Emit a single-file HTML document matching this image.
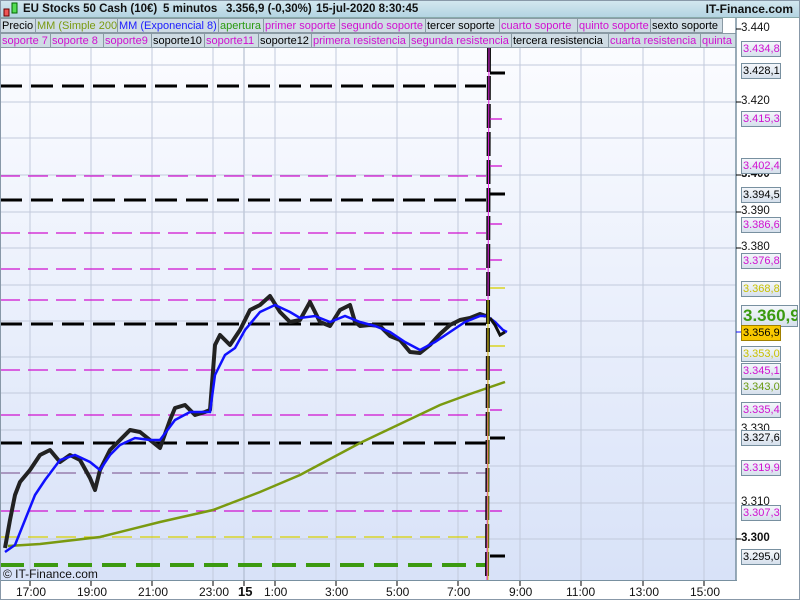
<!DOCTYPE html>
<html><head><meta charset="utf-8"><style>
*{margin:0;padding:0;box-sizing:border-box}
body{width:800px;height:600px;overflow:hidden;background:#fff;font-family:"Liberation Sans",sans-serif;position:relative}
.hdr{position:absolute;left:0;top:0;width:800px;height:18px;background:linear-gradient(#d4e8f0,#b4d4e2);border-bottom:1px solid #8aa;font-size:11.5px;font-weight:bold;color:#111;line-height:18px}
.hdr span{position:absolute;top:0}
.row{position:absolute;left:0;height:15px;font-size:11px;line-height:14px;white-space:nowrap;overflow:hidden;width:736px}
.row span{position:absolute;top:0;background:#cfdce4;border:1px solid #8a9aa4;padding-left:1px;height:15px;overflow:hidden}
.lab{position:absolute;left:741px;width:40px;height:16px;font-size:11px;line-height:14px;border:1px solid #7890a0;background:linear-gradient(#f4f7fb,#d6e0ec);padding-left:1px;overflow:hidden;white-space:nowrap}
.tk{position:absolute;left:741px;font-size:11.5px;color:#111}
.bt{position:absolute;top:585px;font-size:12px;color:#111}
</style></head><body>
<div class="hdr"><svg width="20" height="18" style="position:absolute;left:2px;top:0"><rect x="2" y="9" width="5" height="7" fill="#e55" stroke="#600"/><rect x="10" y="3" width="5" height="10" fill="#5d5" stroke="#060"/></svg><span style="left:23px">EU Stocks 50 Cash (10€)</span><span style="left:163px">5 minutos</span><span style="left:226px">3.356,9 (-0,30%)</span><span style="left:316px">15-jul-2020 8:30:45</span><span style="right:7px;font-size:12px">IT-Finance.com</span></div>
<div class="row" style="top:18px"><span style="left:0;width:36px">Precio</span><span style="left:35px;width:83px;color:#7a9a10">MM (Simple 200)</span><span style="left:117px;width:102px;color:#1c1cff">MM (Exponencial 8)</span><span style="left:218px;width:46px;color:#2a9a10">apertura</span><span style="left:263px;width:77px;color:#d010d0">primer soporte</span><span style="left:339px;width:87px;color:#d010d0">segundo soporte</span><span style="left:425px;width:75px">tercer soporte</span><span style="left:499px;width:79px;color:#d010d0">cuarto soporte</span><span style="left:577px;width:74px;color:#d010d0">quinto soporte</span><span style="left:650px;width:73px">sexto soporte</span></div>
<div class="row" style="top:33px"><span style="left:0;width:51px;color:#d010d0">soporte 7</span><span style="left:50px;width:54px;color:#d010d0">soporte 8</span><span style="left:103px;width:49px;color:#d010d0">soporte9</span><span style="left:151px;width:54px">soporte10</span><span style="left:204px;width:55px;color:#d010d0">soporte11</span><span style="left:258px;width:54px">soporte12</span><span style="left:311px;width:99px;color:#d010d0">primera resistencia</span><span style="left:409px;width:103px;color:#d010d0">segunda resistencia</span><span style="left:511px;width:98px">tercera resistencia</span><span style="left:608px;width:93px;color:#d010d0">cuarta resistencia</span><span style="left:700px;width:60px;color:#d010d0">quinta resistencia</span></div>
<svg width="800" height="600" style="position:absolute;left:0;top:0">
<defs><linearGradient id="g" x1="0" y1="0" x2="0" y2="1"><stop offset="0" stop-color="#fbfcff"/><stop offset="1" stop-color="#d8e2f8"/></linearGradient></defs>
<rect x="1" y="48" width="735" height="532" fill="url(#g)"/>
<g stroke="#c2cadc" stroke-width="1">
<line x1="30" y1="48" x2="30" y2="580"/><line x1="91" y1="48" x2="91" y2="580"/><line x1="152" y1="48" x2="152" y2="580"/><line x1="213" y1="48" x2="213" y2="580"/><line x1="244" y1="48" x2="244" y2="580" stroke="#a8b4c8"/><line x1="275" y1="48" x2="275" y2="580"/><line x1="336" y1="48" x2="336" y2="580"/><line x1="397" y1="48" x2="397" y2="580"/><line x1="458" y1="48" x2="458" y2="580"/><line x1="520" y1="48" x2="520" y2="580"/><line x1="581" y1="48" x2="581" y2="580"/><line x1="643" y1="48" x2="643" y2="580"/><line x1="704" y1="48" x2="704" y2="580"/>
<line x1="0" y1="65" x2="736" y2="65"/><line x1="0" y1="102" x2="736" y2="102"/><line x1="0" y1="138" x2="736" y2="138"/><line x1="0" y1="212" x2="736" y2="212"/><line x1="0" y1="248" x2="736" y2="248"/><line x1="0" y1="285" x2="736" y2="285"/><line x1="0" y1="321" x2="736" y2="321"/><line x1="0" y1="357" x2="736" y2="357"/><line x1="0" y1="393" x2="736" y2="393"/><line x1="0" y1="430" x2="736" y2="430"/><line x1="0" y1="466" x2="736" y2="466"/><line x1="0" y1="503" x2="736" y2="503"/><line x1="0" y1="539" x2="736" y2="539"/><line x1="0" y1="175" x2="736" y2="175"/>
</g>
<g stroke="#d010d0" stroke-width="1.3" stroke-dasharray="20,8">
<line x1="0" y1="176" x2="486" y2="176"/><line x1="0" y1="233" x2="486" y2="233"/><line x1="0" y1="269" x2="486" y2="269"/><line x1="0" y1="300" x2="486" y2="300"/><line x1="0" y1="370" x2="486" y2="370"/><line x1="0" y1="415" x2="486" y2="415"/><line x1="0" y1="473" x2="486" y2="473" stroke="#8a6aa0"/><line x1="0" y1="511" x2="486" y2="511"/>
</g>
<line x1="0" y1="537" x2="486" y2="537" stroke="#d8d000" stroke-width="1.3" stroke-dasharray="20,8"/>
<g stroke="#000" stroke-width="3" stroke-dasharray="22,9">
<line x1="0" y1="86" x2="486" y2="86"/><line x1="0" y1="200" x2="486" y2="200"/><line x1="0" y1="324" x2="486" y2="324"/><line x1="0" y1="443" x2="486" y2="443"/>
</g>
<line x1="0" y1="565" x2="486" y2="565" stroke="#3c9a10" stroke-width="4" stroke-dasharray="24,10"/>
<polyline fill="none" stroke="#7a9a10" stroke-width="2.5" points="8,546 40,544 100,537 160,522 213,510 260,492 300,475 360,443 440,405 470,394 505,382"/>
<polyline fill="none" stroke="#222" stroke-width="4" stroke-linejoin="round" points="5,548 10,520 15,495 20,482 30,470 40,455 50,450 60,462 70,455 80,460 90,478 95,490 100,470 110,450 120,440 130,430 140,432 150,440 160,448 170,420 175,408 185,405 195,415 205,412 210,410 215,345 220,335 230,345 240,330 250,310 260,305 270,296 280,312 290,322 300,320 310,302 320,322 330,326 340,310 350,305 355,322 360,326 370,325 380,326 390,336 400,340 410,352 420,353 430,345 440,334 450,325 460,320 470,318 480,314 486,316"/>
<polyline fill="none" stroke="#1010ff" stroke-width="2.5" points="5,552 15,545 25,520 35,495 45,480 60,460 75,455 90,462 100,470 110,455 120,445 135,438 150,440 160,440 175,420 190,412 210,412 215,375 225,355 235,348 245,330 260,312 275,305 290,312 300,318 315,316 330,322 345,316 360,322 375,326 390,332 405,342 420,350 435,342 450,332 465,322 480,316 487,316 495,322 503,330 507,332"/>
<polyline fill="none" stroke="#111" stroke-width="3" points="490,318 495,325 500,335 505,332"/>
<line x1="489" y1="48" x2="487" y2="580" stroke="#111" stroke-width="4" stroke-dasharray="24,4"/>
<line x1="489" y1="48" x2="487" y2="580" stroke="#e020e0" stroke-width="1"/>
<line x1="488" y1="300" x2="488" y2="580" stroke="#d8d000" stroke-width="1"/>
<g stroke="#000" stroke-width="3"><line x1="490" y1="73" x2="505" y2="73"/><line x1="490" y1="194" x2="505" y2="194"/><line x1="490" y1="438" x2="505" y2="438"/><line x1="490" y1="556" x2="505" y2="556"/></g>
<g stroke="#d010d0" stroke-width="1.3"><line x1="490" y1="119" x2="502" y2="119"/><line x1="490" y1="166" x2="502" y2="166"/><line x1="490" y1="224" x2="502" y2="224"/><line x1="490" y1="260" x2="502" y2="260"/><line x1="490" y1="370" x2="502" y2="370"/><line x1="490" y1="410" x2="502" y2="410"/><line x1="490" y1="511" x2="502" y2="511"/></g>
<g stroke="#d8d000" stroke-width="1.3"><line x1="490" y1="288" x2="505" y2="288"/><line x1="490" y1="346" x2="505" y2="346"/></g>
<line x1="736" y1="18" x2="736" y2="581" stroke="#7890a0" stroke-width="1.5"/>
<line x1="0" y1="580.5" x2="737" y2="580.5" stroke="#7890a0"/>
<g stroke="#000"><line x1="736" y1="29" x2="741" y2="29"/><line x1="736" y1="102" x2="741" y2="102"/><line x1="736" y1="175" x2="741" y2="175"/><line x1="736" y1="212" x2="741" y2="212"/><line x1="736" y1="248" x2="741" y2="248"/><line x1="736" y1="539" x2="741" y2="539"/><line x1="736" y1="332" x2="741" y2="332" stroke="#1010ff"/></g>
<g stroke="#000" stroke-width="1"><line x1="30" y1="581" x2="30" y2="586"/><line x1="91" y1="581" x2="91" y2="586"/><line x1="152" y1="581" x2="152" y2="586"/><line x1="213" y1="581" x2="213" y2="586"/><line x1="244" y1="581" x2="244" y2="586"/><line x1="275" y1="581" x2="275" y2="586"/><line x1="336" y1="581" x2="336" y2="586"/><line x1="397" y1="581" x2="397" y2="586"/><line x1="458" y1="581" x2="458" y2="586"/><line x1="520" y1="581" x2="520" y2="586"/><line x1="581" y1="581" x2="581" y2="586"/><line x1="643" y1="581" x2="643" y2="586"/><line x1="704" y1="581" x2="704" y2="586"/></g>
<rect x="0.5" y="0.5" width="799" height="599" fill="none" stroke="#8898a8"/>
</svg>
<div style="position:absolute;left:3px;top:567px;font-size:12px;color:#111">© IT-Finance.com</div>
<div class="tk" style="top:22px">3.440</div>
<div class="tk" style="top:95px">3.420</div>
<div class="tk" style="top:168px;font-weight:bold">3.400</div>
<div class="tk" style="top:205px">3.390</div>
<div class="tk" style="top:241px">3.380</div>
<div class="tk" style="top:423px">3.330</div>
<div class="tk" style="top:496px">3.310</div>
<div class="tk" style="top:532px;font-weight:bold">3.300</div>
<div class="lab" style="top:41px;color:#d010d0">3.434,8</div>
<div class="lab" style="top:63px">3.428,1</div>
<div class="lab" style="top:111px;color:#d010d0">3.415,3</div>
<div class="lab" style="top:158px;color:#d010d0">3.402,4</div>
<div class="lab" style="top:187px">3.394,5</div>
<div class="lab" style="top:217px;color:#d010d0">3.386,6</div>
<div class="lab" style="top:253px;color:#d010d0">3.376,8</div>
<div class="lab" style="top:281px;color:#c8c000">3.368,8</div>
<div class="lab" style="top:305px;width:57px;height:22px;font-size:17px;line-height:20px;font-weight:bold;color:#3a9a10">3.360,9</div>
<div class="lab" style="top:325px;background:#f8c800;border-color:#a08000">3.356,9</div>
<div class="lab" style="top:346px;color:#c8c000">3.353,0</div>
<div class="lab" style="top:363px;color:#d010d0">3.345,1</div>
<div class="lab" style="top:379px;color:#6a9a10">3.343,0</div>
<div class="lab" style="top:402px;color:#d010d0">3.335,4</div>
<div class="lab" style="top:430px">3.327,6</div>
<div class="lab" style="top:460px;color:#d010d0">3.319,9</div>
<div class="lab" style="top:505px;color:#d010d0">3.307,3</div>
<div class="lab" style="top:549px">3.295,0</div>
<div class="bt" style="left:16px">17:00</div>
<div class="bt" style="left:77px">19:00</div>
<div class="bt" style="left:138px">21:00</div>
<div class="bt" style="left:199px">23:00</div>
<div class="bt" style="left:238px;font-weight:bold;font-size:13px;top:584px">15</div>
<div class="bt" style="left:264px">1:00</div>
<div class="bt" style="left:325px">3:00</div>
<div class="bt" style="left:386px">5:00</div>
<div class="bt" style="left:447px">7:00</div>
<div class="bt" style="left:509px">9:00</div>
<div class="bt" style="left:566px">11:00</div>
<div class="bt" style="left:629px">13:00</div>
<div class="bt" style="left:690px">15:00</div>
</body></html>
